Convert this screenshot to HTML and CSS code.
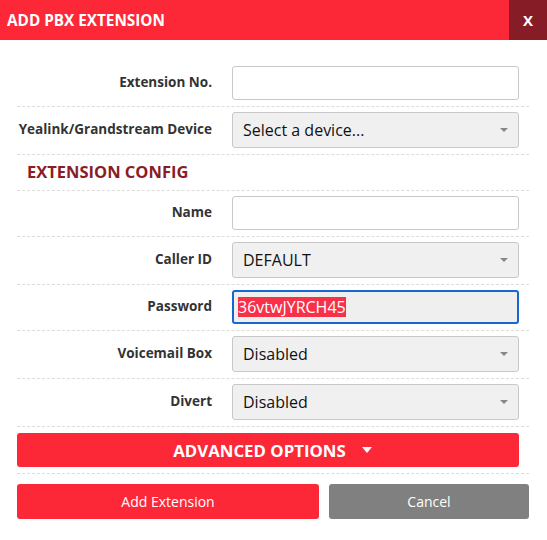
FILE: index.html
```html
<!doctype html>
<html lang="en">
  <head>
    <meta charset="utf-8">
    <title>Add PBX Extension</title>
    <link rel="stylesheet" href="styles.css">
  </head>
  <body>
    <div class="modal">
      <div class="modal-head">
        <span class="modal-title">ADD PBX EXTENSION</span>
        <a class="modal-close" href="#">X</a>
      </div>

      <div class="modal-body">
        <div class="row first">
          <label class="lbl">Extension No.</label>
          <div class="field"></div>
        </div>
        <div class="row">
          <label class="lbl">Yealink/Grandstream Device</label>
          <div class="select"><span>Select a device...</span><i class="caret"></i></div>
        </div>

        <div class="section">EXTENSION CONFIG</div>

        <div class="row">
          <label class="lbl">Name</label>
          <div class="field"></div>
        </div>
        <div class="row">
          <label class="lbl">Caller ID</label>
          <div class="select"><span>DEFAULT</span><i class="caret"></i></div>
        </div>
        <div class="row">
          <label class="lbl">Password</label>
          <div class="field focus"><span class="sel">36vtwJYRCH45</span></div>
        </div>
        <div class="row">
          <label class="lbl">Voicemail Box</label>
          <div class="select"><span>Disabled</span><i class="caret"></i></div>
        </div>
        <div class="row">
          <label class="lbl">Divert</label>
          <div class="select"><span>Disabled</span><i class="caret"></i></div>
        </div>

        <div class="adv-row">
          <a class="adv-btn" href="#">ADVANCED OPTIONS <i class="adv-caret"></i></a>
        </div>

        <div class="actions">
          <a class="btn btn-add" href="#">Add Extension</a>
          <a class="btn btn-cancel" href="#">Cancel</a>
        </div>
      </div>
    </div>
  </body>
</html>
```

FILE: styles.css
```css
html, body
{
	margin: 0;
	padding: 0;
	background: #fff;
	font-family: "Open Sans", "Liberation Sans", sans-serif;
	color: #222;
}

a
{
	text-decoration: none;
}

.modal-head
{
	display: flex;
	align-items: center;
	height: 40px;
	background: #fc2838;
	color: #fff;
}

.modal-title
{
	flex: 1;
	padding-left: 7px;
	font-size: 15.3px;
	font-weight: 700;
}

.modal-close
{
	display: flex;
	align-items: center;
	justify-content: center;
	width: 38px;
	height: 40px;
	background: #861c25;
	color: #fff;
	font-size: 15px;
	font-weight: 700;
}

.modal-body
{
	padding: 21px 18px 0 17px;
}

.row
{
	display: grid;
	grid-template-columns: 195px 287px;
	column-gap: 20px;
	align-items: center;
	padding: 5px 0 6px 0;
	border-bottom: 1px dashed #dcdcdc;
}

.lbl
{
	padding-bottom: 2px;
	text-align: right;
	white-space: nowrap;
	font-size: 13.5px;
	font-weight: 700;
	color: #333;
}

.field
{
	box-sizing: border-box;
	height: 34px;
	border: 1px solid #c8c8c8;
	border-radius: 3px;
	background: #fff;
}

.field.focus
{
	display: flex;
	align-items: center;
	padding-left: 4px;
	border: 2px solid #1767d2;
	background: #efefef;
	font-size: 16px;
}

.sel
{
	background: #f83048;
	color: #fff;
	line-height: 20px;
}

.select
{
	box-sizing: border-box;
	display: flex;
	align-items: center;
	justify-content: space-between;
	height: 36px;
	padding: 0 10px 0 10px;
	border: 1px solid #c8c8c8;
	border-radius: 3px;
	background: #f0f0f0;
	font-size: 16px;
	color: #111;
}

.caret
{
	width: 0;
	height: 0;
	border-left: 4px solid transparent;
	border-right: 4px solid transparent;
	border-top: 4px solid #888;
}

.section
{
	height: 35px;
	line-height: 33px;
	padding-left: 10px;
	font-size: 16.5px;
	font-weight: 700;
	color: #8a1c26;
	border-bottom: 1px dashed #dcdcdc;
}

.adv-row
{
	padding: 6px 10px 6px 0;
	border-bottom: 1px dashed #dcdcdc;
}

.adv-btn
{
	display: flex;
	align-items: center;
	justify-content: center;
	height: 34px;
	padding-left: 9px;
	border-radius: 3px;
	background: #fc2838;
	color: #fff;
	font-size: 16.8px;
	font-weight: 700;
}

.adv-caret
{
	margin-left: 16px;
	width: 0;
	height: 0;
	border-left: 5px solid transparent;
	border-right: 5px solid transparent;
	border-top: 6px solid #fff;
}

.actions
{
	display: flex;
	gap: 10px;
	padding-top: 10px;
}

.btn
{
	display: flex;
	align-items: center;
	justify-content: center;
	height: 35px;
	border-radius: 3px;
	color: #fff;
	font-size: 14px;
}

.btn-add
{
	width: 302px;
	background: #fc2838;
}

.btn-cancel
{
	width: 200px;
	background: #808080;
}
```
